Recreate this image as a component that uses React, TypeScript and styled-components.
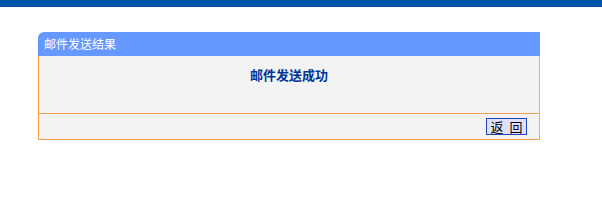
import { createGlobalStyle } from 'styled-components';
import styled from 'styled-components';

const GlobalStyle = createGlobalStyle`
	body {
		margin: 0;
		background: #ffffff;
		font-family: "Noto Sans CJK SC", "DejaVu Sans", sans-serif;
		font-size: 12px;
	}
`;

export default function App() {
	return (
		<>
			<GlobalStyle />
			<TopBar />
			<Page>
				<Panel>
					<PanelHeader>邮件发送结果</PanelHeader>
					<PanelBody>
						<Message>邮件发送成功</Message>
					</PanelBody>
					<PanelFooter>
						<BackBtn type="button">返 回</BackBtn>
					</PanelFooter>
				</Panel>
			</Page>
		</>
	);
}

const TopBar = styled.div`
	height: 7px;
	background: #0053a6;
`;

const Page = styled.div`
	padding: 25px 0 0 38px;
`;

const Panel = styled.div`
	width: 502px;
`;

const PanelHeader = styled.div`
	height: 24px;
	line-height: 24px;
	padding-left: 6px;
	background: #6699ff;
	color: #ffffff;
	font-size: 12px;
	border-top-left-radius: 6px;
`;

const PanelBody = styled.div`
	height: 58px;
	background: #f3f3f3;
	border-left: 1px solid #f7a23a;
	border-right: 1px solid #e8b070;
	border-bottom: 1px solid #f0a050;
	box-sizing: border-box;
	display: flex;
	justify-content: center;
	padding-top: 10px;
`;

const Message = styled.div`
	color: #003399;
	font-size: 13px;
	font-weight: bold;
	line-height: 18px;
`;

const PanelFooter = styled.div`
	height: 26px;
	box-sizing: border-box;
	background: #f3f3f3;
	border-left: 1px solid #f7a23a;
	border-right: 1px solid #e8b070;
	border-bottom: 1px solid #f0a050;
	display: flex;
	justify-content: flex-end;
	align-items: center;
	padding-right: 12px;
`;

const BackBtn = styled.button`
	width: 41px;
	height: 17px;
	padding: 0;
	background: #dde0ff;
	border: 1px solid #2244bb;
	color: #000000;
	font-family: "Noto Sans CJK SC", sans-serif;
	font-size: 13px;
	word-spacing: 3px;
	line-height: 15px;
	cursor: pointer;
`;
